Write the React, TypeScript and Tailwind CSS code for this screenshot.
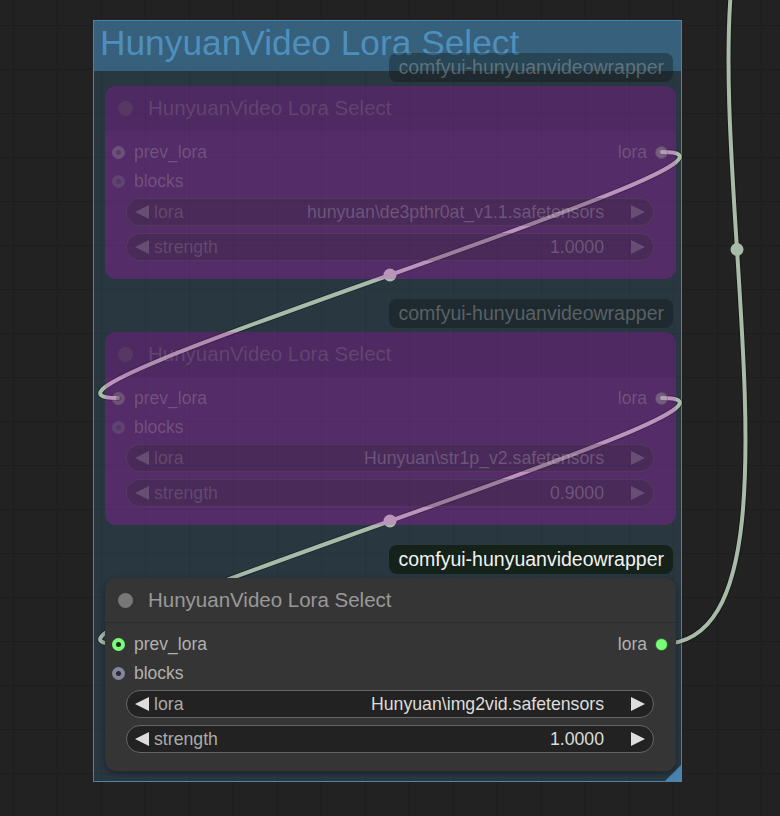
import React from 'react'

const LINK = '#a8baa8'

type NodeData = { pos: string; muted: boolean; lora: string; strength: string }

const nodes: NodeData[] = [
  { pos: 'top-[53px]', muted: true, lora: 'hunyuan\\de3pthr0at_v1.1.safetensors', strength: '1.0000' },
  { pos: 'top-[299px]', muted: true, lora: 'Hunyuan\\str1p_v2.safetensors', strength: '0.9000' },
  { pos: 'top-[545px]', muted: false, lora: 'Hunyuan\\img2vid.safetensors', strength: '1.0000' },
]

// output slot -> input slot, litegraph style spline
const links = [
  [662, 152, 118, 398],
  [662, 398, 118, 644],
  [662, 644, 812, -145],
]

function spline(x0: number, y0: number, x1: number, y1: number) {
  const d = Math.hypot(x1 - x0, y1 - y0) * 0.25
  return `M${x0} ${y0} C${x0 + d} ${y0} ${x1 - d} ${y1} ${x1} ${y1}`
}

function Arrow({ dir, muted }: { dir: 'l' | 'r'; muted: boolean }) {
  return (
    <svg width="14" height="14" viewBox="0 0 14 14" className={muted ? 'opacity-20 shrink-0' : 'shrink-0'}>
      <polygon points={dir === 'l' ? '14,0 14,14 0,7' : '0,0 14,7 0,14'} fill="#dddddd" />
    </svg>
  )
}

function Widget({ label, value, muted }: { label: string; value: string; muted: boolean }) {
  return (
    <div
      className={`h-[28px] rounded-full border px-[8px] flex items-center text-[17.7px] ${
        muted ? 'bg-[#222]/20 border-[#777]/20' : 'bg-[#222] border-[#666]'
      }`}
    >
      <Arrow dir="l" muted={muted} />
      <span className={`ml-[5px] ${muted ? 'text-[#aaa]/25' : 'text-[#aaa]'}`}>{label}</span>
      <span className={`ml-auto mr-[27px] ${muted ? 'text-[#ddd]/25' : 'text-[#ddd]'}`}>{value}</span>
      <Arrow dir="r" muted={muted} />
    </div>
  )
}

function LoraNode({ n }: { n: NodeData }) {
  const m = n.muted
  return (
    <div className={`absolute left-[105px] ${n.pos} w-[571px] flex flex-col items-end gap-[4px]`}>
      <div
        className={`h-[29px] mr-[3px] px-[9px] rounded-[8px] flex items-center text-[19.5px] ${
          m ? 'bg-[#0c140e]/35 text-[#ccc]/35' : 'bg-[#15221a] text-[#f2f2f2]'
        }`}
      >
        comfyui-hunyuanvideowrapper
      </div>
      <div className={`w-full rounded-[11px] flex flex-col ${m ? 'bg-[#ff00ff]/20' : 'bg-[#353535] shadow-[0_2px_6px_rgba(0,0,0,0.35)]'}`}>
        <div
          className={`h-[45px] rounded-t-[11px] border-b px-[13px] flex items-center gap-[15px] ${
            m ? 'bg-black/5 border-transparent' : 'border-[#2c2c2c]'
          }`}
        >
          <div className={`w-[15px] h-[15px] rounded-full ${m ? 'bg-[#777]/20' : 'bg-[#777]'}`} />
          <span className={`text-[20.5px] ${m ? 'text-[#aaa]/22' : 'text-[#999]'}`}>HunyuanVideo Lora Select</span>
        </div>
        <div className="flex flex-col pt-[7px] pb-[18px] text-[17.5px]">
          <div className="h-[29px] flex items-center justify-between pl-[7px] pr-[8px]">
            <div className="flex items-center gap-[9px]">
              <div
                className={`w-[13px] h-[13px] rounded-full flex items-center justify-center ${
                  m ? 'bg-[#aaa]/30' : 'bg-[#77ff77]'
                }`}
              >
                <div className={`w-[5px] h-[5px] rounded-full ${m ? 'bg-[#222]/30' : 'bg-[#1d2a1d]'}`} />
              </div>
              <span className={m ? 'text-[#bbb]/28' : 'text-[#b0b0b0]'}>prev_lora</span>
            </div>
            <div className="flex items-center gap-[8px]">
              <span className={m ? 'text-[#bbb]/28' : 'text-[#b0b0b0]'}>lora</span>
              <div
                className={`w-[13px] h-[13px] rounded-full border ${
                  m ? 'bg-[#aaa]/40 border-black/20' : 'bg-[#77ff77] border-black/60'
                }`}
              />
            </div>
          </div>
          <div className="h-[29px] flex items-center gap-[9px] pl-[7px]">
            <div
              className={`w-[13px] h-[13px] rounded-full flex items-center justify-center ${
                m ? 'bg-[#8585a0]/25' : 'bg-[#8585a0]'
              }`}
            >
              <div className={`w-[5px] h-[5px] rounded-full ${m ? 'bg-[#222]/25' : 'bg-[#2a2a33]'}`} />
            </div>
            <span className={m ? 'text-[#bbb]/28' : 'text-[#b0b0b0]'}>blocks</span>
          </div>
          <div className="mt-[2px] ml-[21px] mr-[22px] flex flex-col gap-[7px]">
            <Widget label="lora" value={n.lora} muted={m} />
            <Widget label="strength" value={n.strength} muted={m} />
          </div>
        </div>
      </div>
    </div>
  )
}

export default function App() {
  return (
    <div className="relative w-[780px] h-[816px] overflow-hidden bg-[#222] bg-[linear-gradient(to_right,#1d1d1d_1px,transparent_1px),linear-gradient(to_bottom,#1d1d1d_1px,transparent_1px)] bg-[size:44px_44px] bg-[position:13px_25px] font-['Liberation_Sans',Arial,sans-serif]">
      {/* group */}
      <div className="absolute left-[93px] top-[20px] w-[589px] h-[762px] border border-[#4a84ad] flex flex-col">
        <div className="h-[50px] shrink-0 bg-[#3f789e]/72 pl-[6px] text-[35.3px] leading-[44px] text-[#4f8fbd]">
          HunyuanVideo Lora Select
        </div>
        <div className="flex-1 bg-[#3f789e]/25" />
        <svg width="16" height="16" viewBox="0 0 16 16" className="absolute right-0 bottom-0">
          <polygon points="16,0 16,16 0,16" fill="#4a84ad" />
        </svg>
      </div>

      {/* links sit between group and nodes */}
      <svg width="780" height="816" className="absolute inset-0">
        {links.map(([x0, y0, x1, y1], i) => (
          <g key={i}>
            <path d={spline(x0, y0, x1, y1)} fill="none" stroke="rgba(0,0,0,0.3)" strokeWidth={6} />
            <path d={spline(x0, y0, x1, y1)} fill="none" stroke={LINK} strokeWidth={4} strokeLinecap="round" />
            <circle cx={(x0 + x1) / 2} cy={(y0 + y1) / 2} r={6.5} fill={LINK} />
          </g>
        ))}
      </svg>

      {nodes.map((n, i) => (
        <LoraNode key={i} n={n} />
      ))}
    </div>
  )
}
